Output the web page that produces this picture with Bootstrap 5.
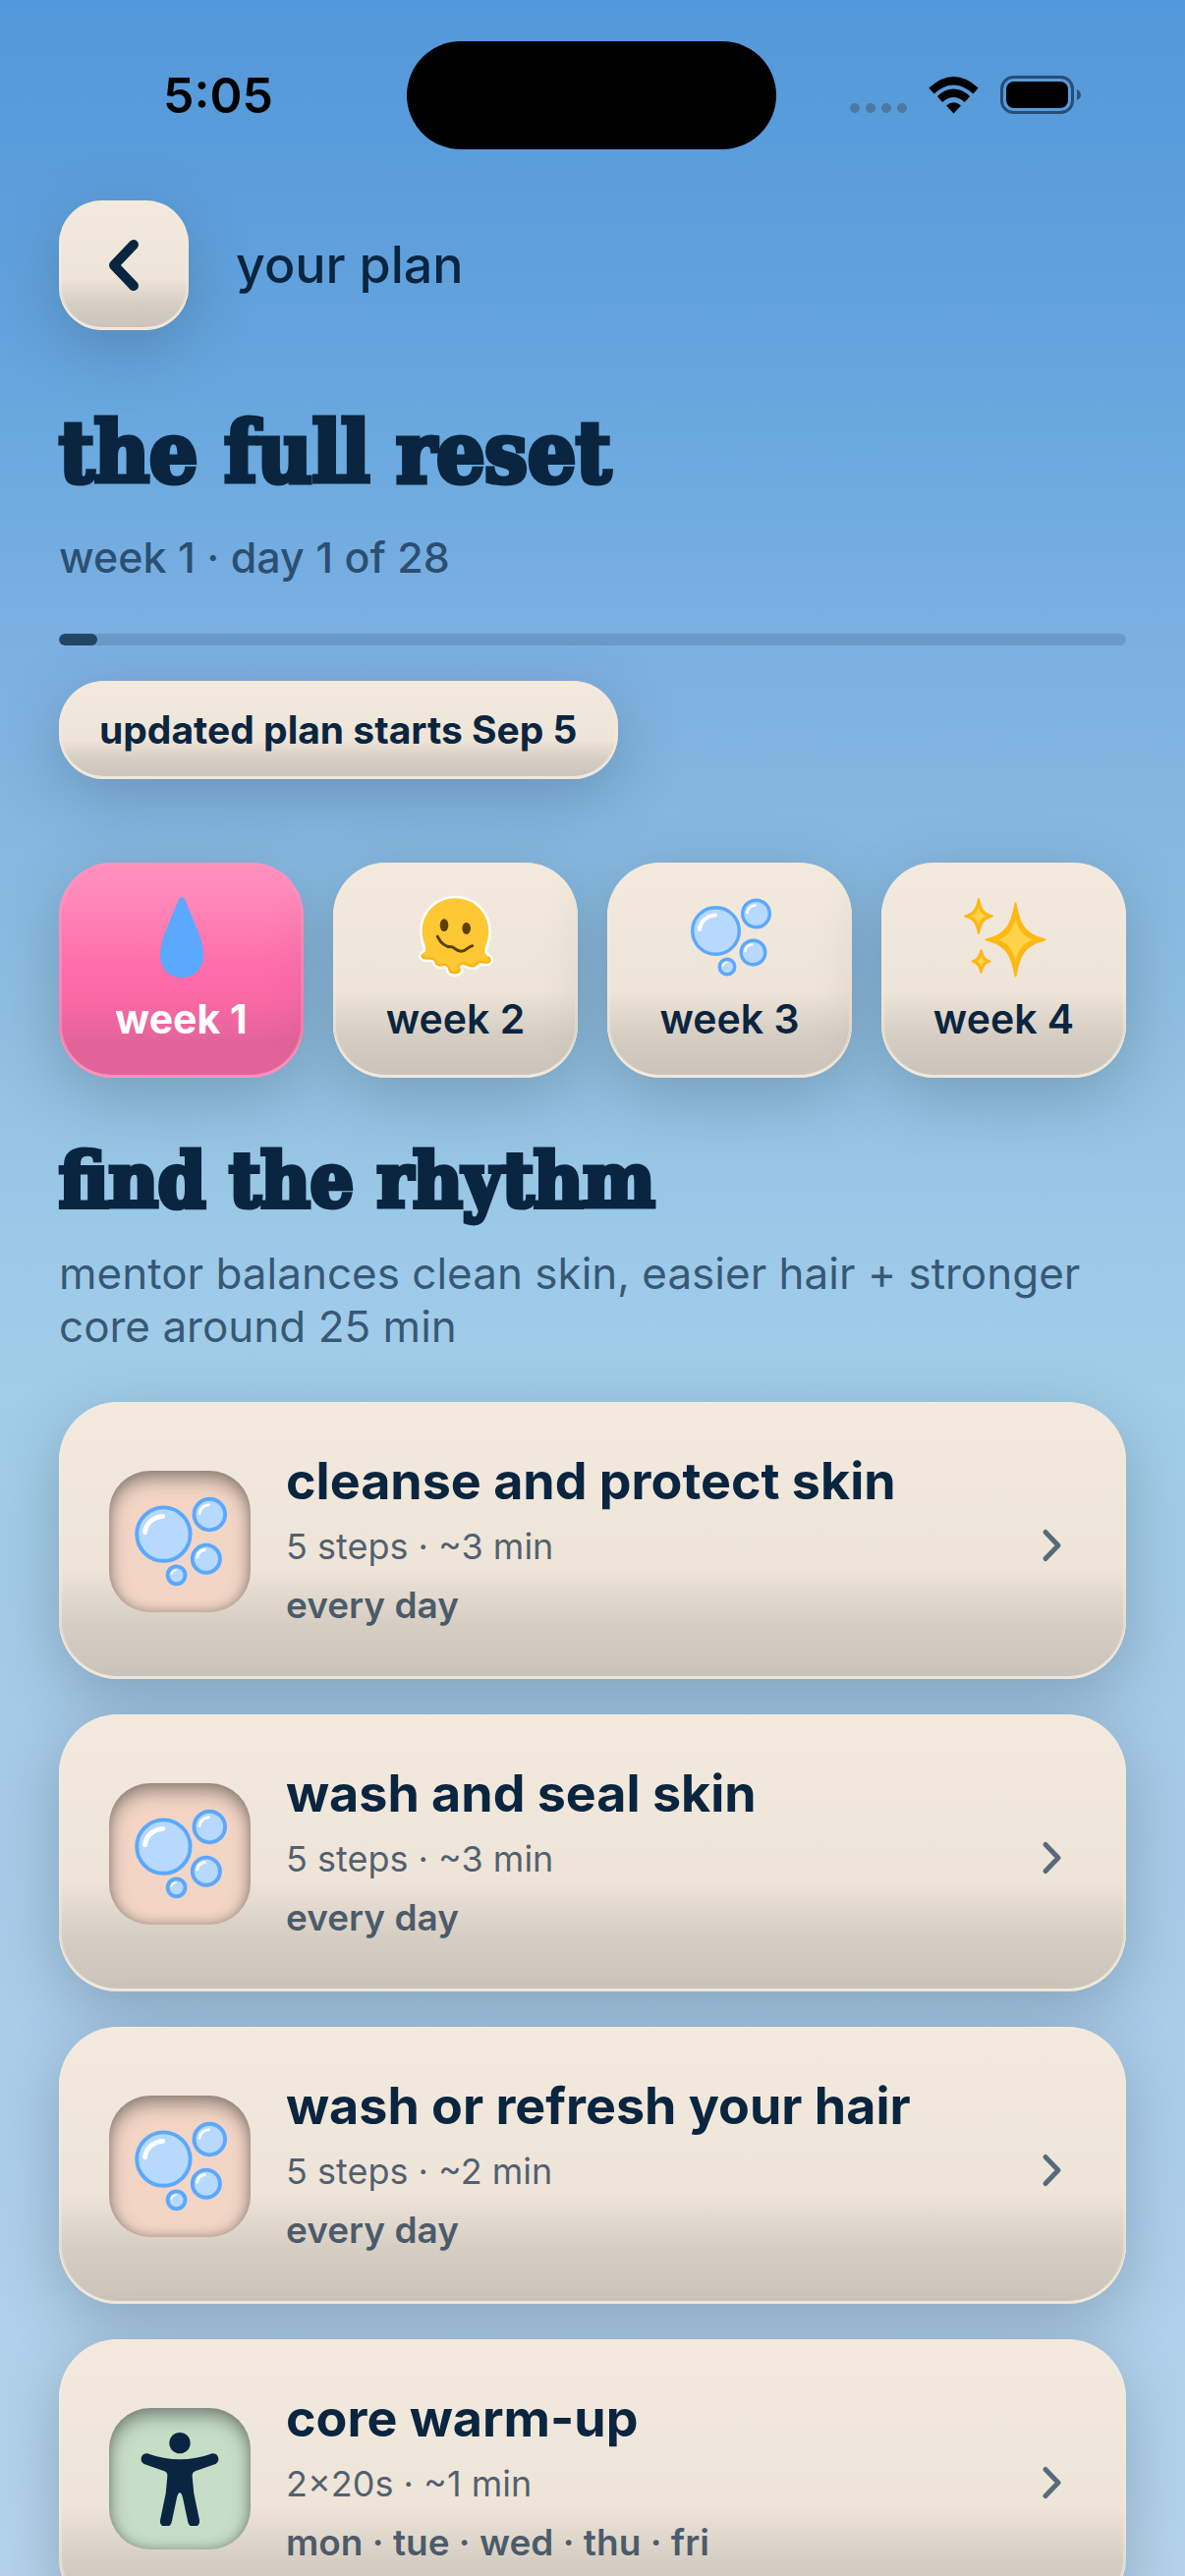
<!DOCTYPE html>
<html lang="en">
<head>
<meta charset="utf-8">
<meta name="viewport" content="width=device-width, initial-scale=1">
<title>your plan</title>
<link rel="stylesheet" href="https://cdn.jsdelivr.net/npm/bootstrap@5.3.0/dist/css/bootstrap.min.css">
<style>
:root{--navy:#0a2540;--cream:#f3eadd}
body{font-family:Inter,"Liberation Sans",sans-serif;color:var(--navy);background:#5398da;overflow:hidden}
.screen{height:100vh;overflow:hidden;background:linear-gradient(#5398da 0%,#62a2dd 12%,#6caadf 18%,#7aafe1 24%,#85b7e0 32%,#90bfe1 40%,#9bc9e8 48%,#a1cde8 54%,#a5cae7 66%,#abcdea 80%,#b5d3ec 100%)}
.status{padding-top:42px;margin-bottom:52px;color:#000}
.island{width:376px;height:110px;border-radius:55px;background:#000}
.clock{font-size:50px;line-height:60px;font-weight:600;padding-left:30px}
.signals{gap:22px;padding-right:32px}
.page-pad{padding-left:60px;padding-right:60px}

/* raised cream surface shared by buttons, pill, tiles and cards */
.puffy{color:var(--navy);border:0;background:linear-gradient(#f3eadd 0%,#efe6da 45%,#eee4d8 60%,#d6cec3 80%,#c9c3b9 100%);box-shadow:inset 0 -3px 0 rgba(243,234,221,.9),inset 0 0 0 3px rgba(243,234,221,.5),0 18px 64px rgba(60,80,95,.32)}
.puffy-pink{color:#fff;background:linear-gradient(#ff8fbc 0%,#ff8ab9 14%,#ff6ca9 50%,#fb69a5 63%,#e2639a 84%,#e0649b 100%);box-shadow:inset 0 -3px 0 rgba(255,150,190,.8),inset 0 0 0 3px rgba(255,150,190,.6),0 18px 64px rgba(60,80,95,.32)}
.back{width:132px;height:132px;border-radius:44px}
.topbar{gap:48px}
.topbar-name{font-size:52px;line-height:60px;font-weight:500}
.display-serif{font-family:"DejaVu Serif Condensed","DejaVu Serif",serif;font-weight:700;-webkit-text-stroke:5px var(--navy);stroke-linejoin:round}
.plan-title{font-size:86px;line-height:88px;margin:81px 0 35px}
.muted{color:rgba(10,37,64,.7)}
.day-line{font-size:43px;line-height:54px;font-weight:500;margin-bottom:51px}
.plan-progress{height:12px;border-radius:6px;background:rgba(10,37,64,.15);margin-bottom:36px}
.plan-progress .progress-bar{border-radius:6px;background:rgba(10,37,64,.72)}
.pill{height:100px;padding:0 41px;border-radius:46px;font-size:39px;line-height:48px;font-weight:700}
.weeks{display:grid;grid-template-columns:repeat(4,1fr);gap:30px;margin-top:85px}
.week{padding:34px 0 35px;gap:16px;border-radius:54px;font-size:41px;line-height:50px;font-weight:600}
.week.puffy-pink{font-weight:700}
.week svg{overflow:visible}
.section-title{font-size:77px;line-height:80px;margin:64px 0 28px}
.lede{font-size:44px;line-height:54px;margin-bottom:50px}
.routines{gap:36px}
.routine{padding:47px 63px 45px 51px;border-radius:60px;gap:36px;text-decoration:none}
.well{width:144px;height:144px;border-radius:42px;background:#f2d5c5;box-shadow:inset 0 8px 18px rgba(50,50,50,.5),inset 0 -2px 10px rgba(60,60,60,.25)}
.well-green{background:#c6dec6}
.routine-text{padding-top:2px}
.routine-name{font-size:52px;line-height:64px;font-weight:700;margin-bottom:4px}
.routine-meta{font-size:36px;line-height:60px}
.routine-days{font-size:37px;line-height:60px;font-weight:600}
.routine .chev{margin-top:8px}
</style>
</head>
<body>
<svg width="0" height="0" class="position-absolute" aria-hidden="true">
  <symbol id="bubbles" viewBox="0 0 84 84">
    <g fill="#b7d8ff" stroke="#5aa8ff" stroke-width="3.4">
      <circle cx="27.5" cy="35.5" r="23.8"/><circle cx="68.5" cy="18" r="13.8"/><circle cx="65.5" cy="57.5" r="12.3"/><circle cx="39" cy="72" r="7.8"/>
    </g>
    <g fill="none" stroke="#fff" stroke-linecap="round">
      <path stroke-width="4.2" d="M11 34C12 26 18 20 27 19.5"/><path stroke-width="2.6" d="M59.5 17C60 13 63 10 67.5 9.5M57.5 56C58 52.500 60.500 50 64 49.500"/><path stroke-width="1.600" d="M34.500 71C35 69 36.500 67.800 38.500 67.500"/>
    </g>
  </symbol>
  <symbol id="chev" viewBox="0 0 24 36"><path d="M5 4.500 18 18 5 31.500" fill="none" stroke="#576a7b" stroke-width="5" stroke-linecap="round" stroke-linejoin="round"/></symbol>
</svg>
<div class="screen">
  <div class="status d-flex align-items-center">
    <div class="col text-center clock">5:05</div>
    <div class="island flex-shrink-0"></div>
    <div class="col d-flex justify-content-center signals">
      <svg width="58" height="40" viewBox="0 0 58 40" fill="#4c6f92" fill-opacity=".8"><circle cx="5" cy="33" r="5"/><circle cx="21" cy="33" r="5"/><circle cx="37" cy="33" r="5"/><circle cx="53" cy="33" r="5"/></svg>
      <svg width="51" height="40" viewBox="0 0 51 40" fill="none" stroke="#000"><path stroke-width="8" d="M3 15.500Q25.500-5 48 15.500"/><path stroke-width="8" d="M11.500 24Q25.500 11.500 39.500 24"/><path fill="#000" stroke="none" d="M18 30.500Q25.500 24 33 30.500L25.500 38.500Z"/></svg>
      <svg width="82" height="40" viewBox="0 0 82 40"><rect x="1.500" y="1.500" width="72" height="36" rx="12" fill="none" stroke="#0a2540" stroke-opacity=".65" stroke-width="3"/><rect x="6" y="6" width="63" height="27" rx="8" fill="#000"/><path d="M78 14Q82 16 82 19.500T78 25Z" fill="#0a2540" fill-opacity=".6"/></svg>
    </div>
  </div>
  <main class="page-pad">
    <header class="topbar d-flex align-items-center">
      <button type="button" class="puffy back d-flex align-items-center justify-content-center p-0" aria-label="Back">
        <svg width="60" height="60" viewBox="0 0 60 60"><path d="M40 9 20 30 40 51" fill="none" stroke="#0a2540" stroke-width="10" stroke-linecap="round" stroke-linejoin="round"/></svg>
      </button>
      <div class="topbar-name">your plan</div>
    </header>
    <h1 class="display-serif plan-title">the full reset</h1>
    <p class="muted day-line">week 1 · day 1 of 28</p>
    <div class="progress plan-progress" role="progressbar" aria-label="Plan progress" aria-valuenow="1" aria-valuemin="0" aria-valuemax="28"><div class="progress-bar" style="width:3.57%"></div></div>
    <div class="puffy pill d-inline-flex align-items-center">updated plan starts Sep 5</div>
    <div class="weeks">
      <button type="button" class="puffy puffy-pink week d-flex flex-column align-items-center">
        <svg width="84" height="84" viewBox="0 0 84 84"><path d="M42 1C44 1 45 3 46.500 7C54 26 64 44 64 60C64 74 55 83 42 83S20 74 20 60C20 44 30 26 37.500 7C39 3 40 1 42 1Z" fill="#5aa8ff"/></svg>
        <span>week 1</span>
      </button>
      <button type="button" class="puffy week d-flex flex-column align-items-center">
        <svg width="84" height="84" viewBox="126 36 252 252">
          <path d="M250 43C308 43 352 88 352 145C352 170 341 190 340 203C339 216 358 221 359 232C359 243 341 243 326 241C318 241 320 251 309 253C294 256 284 246 274 246C264 246 262 251 266 259C270 267 262 274 249 274C236 274 230 269 229 261C228 250 221 248 209 250C198 252 189 247 187 238C186 231 180 228 168 229C155 230 144 226 146 217C148 209 160 210 160 199C160 188 149 170 149 145C149 88 192 43 250 43Z" fill="#fec734" stroke="#fff" stroke-width="16" stroke-linejoin="round"/>
          <path d="M250 43C308 43 352 88 352 145C352 170 341 190 340 203C339 216 358 221 359 232C359 243 341 243 326 241C318 241 320 251 309 253C294 256 284 246 274 246C264 246 262 251 266 259C270 267 262 274 249 274C236 274 230 269 229 261C228 250 221 248 209 250C198 252 189 247 187 238C186 231 180 228 168 229C155 230 144 226 146 217C148 209 160 210 160 199C160 188 149 170 149 145C149 88 192 43 250 43Z" fill="#fec734"/>
          <path d="M352 224C359 230 358 240 343 239C330 236 318 236 314 242C311 251 298 252 288 246C276 240 258 242 260 254C266 266 258 271 249 271S233 267 232 259C231 248 220 244 209 247C199 249 192 245 190 237C188 228 178 226 167 226C157 227 147 225 149 217" fill="none" stroke="#ffb010" stroke-width="6" stroke-linecap="round"/>
          <ellipse cx="216" cy="125" rx="13" ry="19" fill="#5c4104"/><ellipse cx="284" cy="135" rx="13" ry="18" fill="#5c4104"/>
          <path d="M196 160C206 181 219 192 239 191C251 195 254 205 268 205C285 204 288 190 302 188" fill="none" stroke="#5c4104" stroke-width="9" stroke-linecap="round" stroke-linejoin="round"/>
        </svg>
        <span>week 2</span>
      </button>
      <button type="button" class="puffy week d-flex flex-column align-items-center">
        <svg width="84" height="84"><use href="#bubbles"/></svg>
        <span>week 3</span>
      </button>
      <button type="button" class="puffy week d-flex flex-column align-items-center">
        <svg width="84" height="84" viewBox="0 0 84 84" stroke-linejoin="round">
          <g fill="#fcb813" stroke="#fcb813" stroke-width="2"><path d="M53.500 7.500C57 28 62 39.500 83.500 44.500C62 49.500 57 61 53.500 81.500C50 61 45 49.500 23.500 44.500C45 39.500 50 28 53.500 7.500Z"/><path d="M16 3C18 13 20.500 18 30 20.500C20.500 23 18 28 16 38C14 28 11.500 23 2 20.500C11.500 18 14 13 16 3Z"/><path d="M18.500 55C20 61 21.500 64.500 27.500 66.500C21.500 68.500 20 72 18.500 78C17 72 15.500 68.500 9.500 66.500C15.500 64.500 17 61 18.500 55Z"/></g>
          <g fill="#ffd24a"><path d="M53.500 22C56 34 61 41 71 44.500C61 48 56 55 53.500 67C51 55 46 48 36 44.500C46 41 51 34 53.500 22Z"/><path d="M16 11C17.500 16.500 19.500 19 24.500 20.500C19.500 22 17.500 24.500 16 30C14.500 24.500 12.500 22 7.500 20.500C12.500 19 14.500 16.500 16 11Z"/><path d="M18.500 61C19.300 64 20.500 65.500 23.500 66.500C20.500 67.500 19.300 69 18.500 72C17.700 69 16.500 67.500 13.500 66.500C16.500 65.500 17.700 64 18.500 61Z"/></g>
        </svg>
        <span>week 4</span>
      </button>
    </div>
    <h2 class="display-serif section-title">find the rhythm</h2>
    <p class="muted lede">mentor balances clean skin, easier hair + stronger core around 25 min</p>
    <div class="routines d-flex flex-column">
      <a href="#" class="puffy routine d-flex align-items-center">
        <span class="well d-flex align-items-center justify-content-center flex-shrink-0"><svg width="96" height="96"><use href="#bubbles"/></svg></span>
        <span class="routine-text flex-grow-1"><span class="routine-name d-block">cleanse and protect skin</span><span class="muted routine-meta d-block">5 steps · ~3 min</span><span class="muted routine-days d-block">every day</span></span>
        <svg class="chev" width="24" height="36"><use href="#chev"/></svg>
      </a>
      <a href="#" class="puffy routine d-flex align-items-center">
        <span class="well d-flex align-items-center justify-content-center flex-shrink-0"><svg width="96" height="96"><use href="#bubbles"/></svg></span>
        <span class="routine-text flex-grow-1"><span class="routine-name d-block">wash and seal skin</span><span class="muted routine-meta d-block">5 steps · ~3 min</span><span class="muted routine-days d-block">every day</span></span>
        <svg class="chev" width="24" height="36"><use href="#chev"/></svg>
      </a>
      <a href="#" class="puffy routine d-flex align-items-center">
        <span class="well d-flex align-items-center justify-content-center flex-shrink-0"><svg width="96" height="96"><use href="#bubbles"/></svg></span>
        <span class="routine-text flex-grow-1"><span class="routine-name d-block">wash or refresh your hair</span><span class="muted routine-meta d-block">5 steps · ~2 min</span><span class="muted routine-days d-block">every day</span></span>
        <svg class="chev" width="24" height="36"><use href="#chev"/></svg>
      </a>
      <a href="#" class="puffy routine d-flex align-items-center">
        <span class="well well-green d-flex align-items-center justify-content-center flex-shrink-0"><svg width="96" height="96" viewBox="135 131 288 288" fill="#0a2540"><circle cx="279" cy="166" r="32"/><path d="M180 198C214 210 246 216 279 216S344 210 378 198C398 196 404 222 388 230L326 252Q316 256 317 268L322 320L339 402C342 426 310 430 304 408L287 328Q279 306 271 328L254 408C248 430 216 426 219 402L236 320L241 268Q242 256 232 252L170 230C154 222 160 196 180 198Z"/></svg></span>
        <span class="routine-text flex-grow-1"><span class="routine-name d-block">core warm-up</span><span class="muted routine-meta d-block">2×20s · ~1 min</span><span class="muted routine-days d-block">mon · tue · wed · thu · fri</span></span>
        <svg class="chev" width="24" height="36"><use href="#chev"/></svg>
      </a>
    </div>
  </main>
</div>
<script src="https://cdn.jsdelivr.net/npm/bootstrap@5.3.0/dist/js/bootstrap.bundle.min.js"></script>
</body>
</html>
